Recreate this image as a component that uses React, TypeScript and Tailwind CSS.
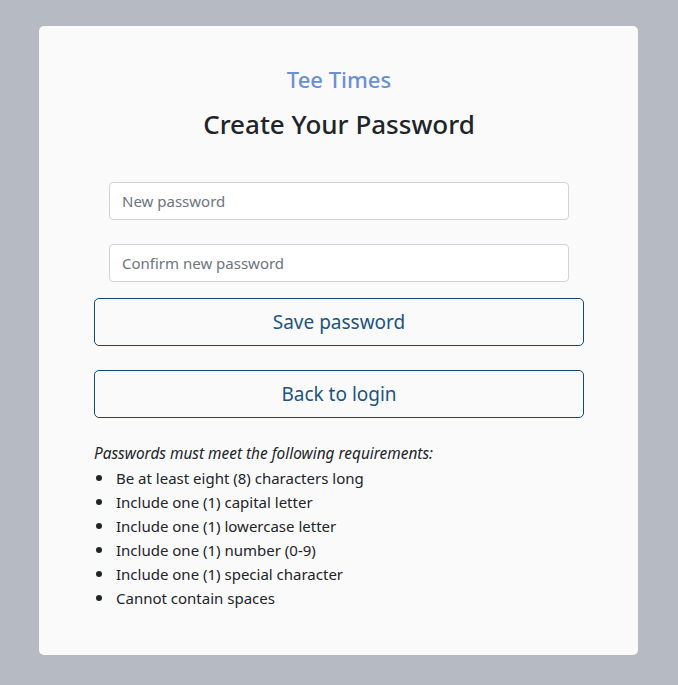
import React from "react";

/* Create-password card: brand, heading, two inputs, two outline buttons, rules list */

const requirements = [
  "Be at least eight (8) characters long",
  "Include one (1) capital letter",
  "Include one (1) lowercase letter",
  "Include one (1) number (0-9)",
  "Include one (1) special character",
  "Cannot contain spaces",
];

export default function App() {
  return (
    <div
      className="min-h-[685px] w-full bg-[#b6bac3] pt-[26px] pb-[30px]"
      style={{ fontFamily: '"Noto Sans", "Open Sans", sans-serif' }}
    >
      <div className="ml-[39px] w-[599px] h-[629px] rounded-[5px] bg-[#fafafa] pt-[40px] pl-[55px] pr-[54px]">
        <h2 className="text-center text-[22px] leading-[30px] font-medium text-[#6b8fd6] -mt-[2px]">
          Tee Times
        </h2>
        <h1 className="mt-[12px] text-center text-[26px] leading-[36px] font-medium text-[#212529]">
          Create Your Password
        </h1>

        <form className="mt-[40px]" onSubmit={(e) => e.preventDefault()}>
          <div className="px-[15px] flex flex-col gap-[24px]">
            <input
              type="password"
              placeholder="New password"
              className="h-[38px] w-full rounded-[4px] border border-[#ced4da] bg-white px-[12px] text-[15px] text-[#495057] placeholder:text-[#6c757d] outline-none"
            />
            <input
              type="password"
              placeholder="Confirm new password"
              className="h-[38px] w-full rounded-[4px] border border-[#ced4da] bg-white px-[12px] text-[15px] text-[#495057] placeholder:text-[#6c757d] outline-none"
            />
          </div>

          <div className="mt-[16px] flex flex-col gap-[24px]">
            <button
              type="submit"
              className="h-[48px] w-full rounded-[5px] border border-[#0f4c75] bg-transparent text-[19px] text-[#1b5580]"
            >
              Save password
            </button>
            <button
              type="button"
              className="h-[48px] w-full rounded-[5px] border border-[#0f4c75] bg-transparent text-[19px] text-[#1b5580]"
            >
              Back to login
            </button>
          </div>
        </form>

        <div className="mt-[24px] text-[15px] leading-[24px] text-[#212529]">
          <p className="italic text-[15.4px]">Passwords must meet the following requirements:</p>
          <ul>
            {requirements.map((r) => (
              <li key={r} className="flex items-center">
                <span className="ml-[2px] mr-[14px] h-[6px] w-[6px] rounded-full bg-[#212529]" />
                {r}
              </li>
            ))}
          </ul>
        </div>
      </div>
    </div>
  );
}
